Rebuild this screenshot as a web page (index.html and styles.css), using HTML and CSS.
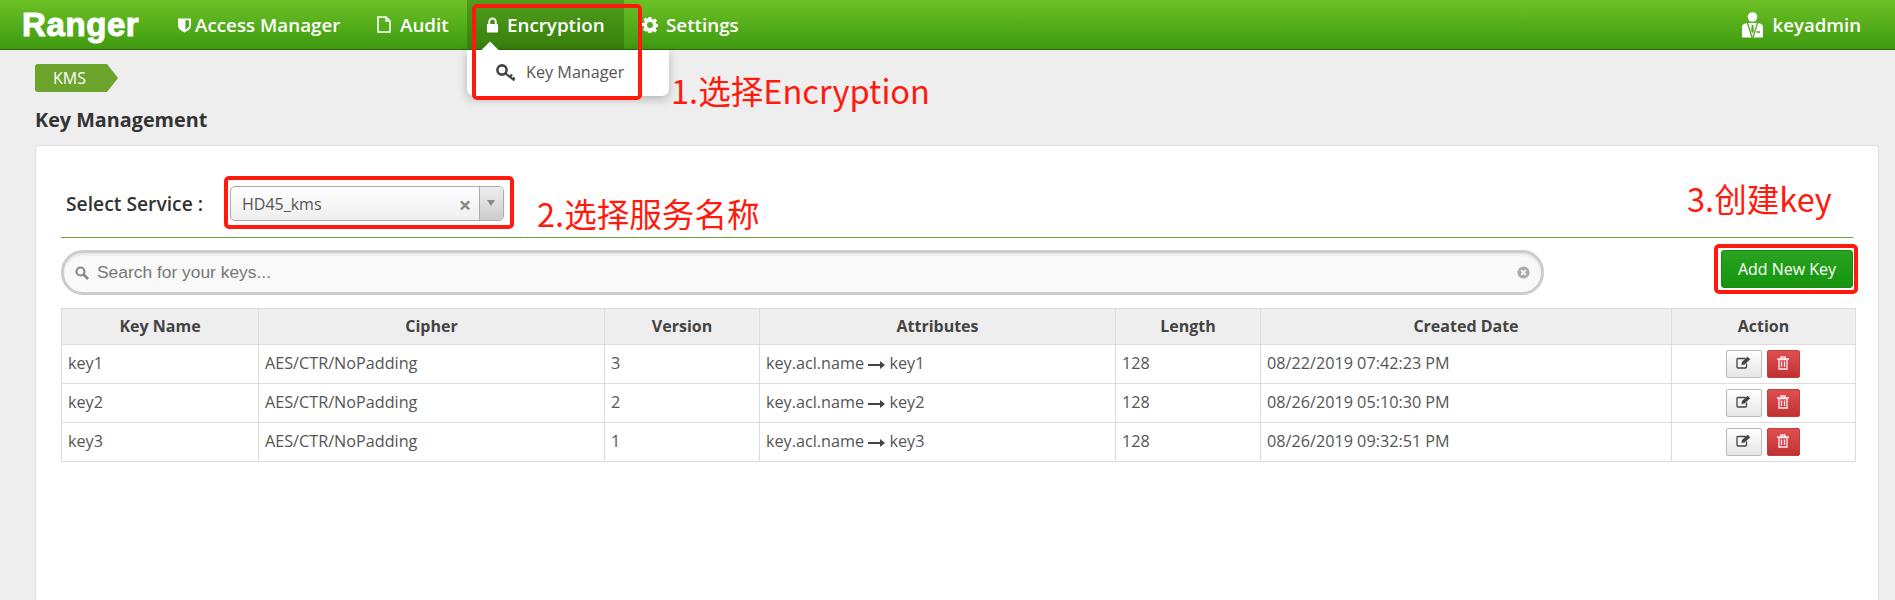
FILE: index.html
```html
<!DOCTYPE html>
<html lang="en">
<head>
  <meta charset="UTF-8">
  <title>Ranger - Key Management</title>
  <link rel="stylesheet" href="styles.css">
</head>
<body>
  <header class="navbar">
    <a class="brand">Ranger</a>
    <nav class="nav-links">
      <a class="nav-item nav-access">
        <svg class="nav-icon" viewBox="0 0 14 16" width="13" height="16"><path fill="#fff" d="M0 1h14v7c0 4-3 6-7 8-4-2-7-4-7-8z"/><path fill="#4fa519" d="M8 3h4v5c0 2-2 4-4 5z"/></svg>
        Access Manager
      </a>
      <a class="nav-item nav-audit">
        <svg class="nav-icon" viewBox="0 0 14 17" width="14" height="17"><path fill="none" stroke="#fff" stroke-width="1.6" d="M1 1h8l4 4v11H1z"/><path fill="none" stroke="#fff" stroke-width="1.4" d="M9 1v4h4"/></svg>
        Audit
      </a>
      <a class="nav-item nav-encryption">
        <svg class="nav-icon" viewBox="0 0 14 17" width="13" height="16"><path fill="none" stroke="#fff" stroke-width="2" d="M3.5 8V5a3.5 3.5 0 0 1 7 0v3"/><rect fill="#fff" x="1" y="7.500" width="12" height="9" rx="1"/></svg>
        Encryption
      </a>
      <a class="nav-item nav-settings">
        <svg class="nav-icon" viewBox="0 0 16 16" width="16" height="16"><path fill="#fff" fill-rule="evenodd" d="M6.600 0h2.800l.4 2.300 1.300.5L13 1.500l2 2-1.300 1.900.5 1.300 2.300.4v2.800l-2.300.4-.5 1.300 1.300 1.900-2 2-1.900-1.300-1.300.5-.4 2.300H6.600l-.4-2.300-1.300-.5L3 14.500l-2-2 1.300-1.900-.5-1.300L0 8.900V6.100l2.300-.4.5-1.300L1.500 2.500l2-2 1.400 1.300 1.300-.5zM8 5a3 3 0 1 0 0 6 3 3 0 0 0 0-6z"/></svg>
        Settings
      </a>
    </nav>
    <a class="nav-user">
      <svg viewBox="0 0 21 26" width="21" height="26"><circle fill="#fff" cx="10.500" cy="5" r="4.800"/><path fill="#fff" d="M0 14.500c0-2 2-3 5.500-3.500h10c3.500.5 5.500 1.500 5.500 3.500v10c0 1-1 1-1 1H1s-1 0-1-1z"/><path fill="none" stroke="#4fa519" stroke-width="1.300" d="M5.500 11l4.500 14.500M15.500 11L11 25.500M14.500 20h3.500"/><path fill="#4fa519" d="M9.700 13h1.600l.5 6-1.300 2.500L9.200 19z"/></svg>
      keyadmin
    </a>
  </header>

  <div class="dropdown">
    <span class="dropdown-caret"></span>
    <a class="dropdown-item">
      <svg viewBox="0 0 20 18" width="20" height="18"><circle fill="none" stroke="#444" stroke-width="2.600" cx="6" cy="6" r="4.600"/><path fill="none" stroke="#444" stroke-width="2.200" d="M9.500 9.500l9 7M14 13l2-2.500M17 15.500l1.500-2"/></svg>
      <span class="dropdown-label">Key Manager</span>
    </a>
  </div>

  <main class="content">
    <div class="breadcrumb">KMS</div>
    <h3 class="page-title">Key Management</h3>

    <section class="card">
      <div class="service-row">
        <label class="service-label">Select Service :</label>
        <div class="select-box">
          <span class="select-value">HD45_kms</span>
          <span class="select-clear">&times;</span>
          <span class="select-arrow"></span>
        </div>
      </div>

      <div class="toolbar">
        <div class="search-box">
          <svg class="search-icon" viewBox="0 0 14 14" width="14" height="14"><circle fill="none" stroke="#888" stroke-width="2.200" cx="5.500" cy="5.500" r="4"/><path stroke="#888" stroke-width="2.600" d="M8.500 8.500l4.500 4.500"/></svg>
          <span class="search-text">Search for your keys...</span>
          <svg class="search-clear" viewBox="0 0 14 14" width="13" height="13"><circle fill="#aaa" cx="7" cy="7" r="6.500"/><path stroke="#f8f8f8" stroke-width="2" d="M4.500 4.500l5 5M9.500 4.500l-5 5"/></svg>
        </div>
        <button class="btn-add">Add New Key</button>
      </div>

      <table class="key-table">
        <thead>
          <tr>
            <th class="col-name">Key Name</th>
            <th class="col-cipher">Cipher</th>
            <th class="col-version">Version</th>
            <th class="col-attrs">Attributes</th>
            <th class="col-length">Length</th>
            <th class="col-date">Created Date</th>
            <th class="col-action">Action</th>
          </tr>
        </thead>
        <tbody>
          <tr>
            <td>key1</td>
            <td>AES/CTR/NoPadding</td>
            <td>3</td>
            <td>key.acl.name <svg class="attr-arrow" viewBox="0 0 17 10" width="17" height="10"><path fill="#444" d="M0 4h12V1l5 4-5 4V6H0z"/></svg> key1</td>
            <td>128</td>
            <td>08/22/2019 07:42:23 PM</td>
            <td class="cell-action">
              <button class="btn-edit"><svg viewBox="0 0 15 13" width="15" height="13"><path fill="none" stroke="#444" stroke-width="1.300" d="M10.500 7.500V11a1 1 0 0 1-1 1H2a1 1 0 0 1-1-1V3.500a1 1 0 0 1 1-1h7.500"/><path fill="#444" d="M5.500 9l.5-3L11.500 .8l2.800 2.400L8.500 8.500z"/></svg></button>
              <button class="btn-delete"><svg viewBox="0 0 12 14" width="12" height="14"><path fill="none" stroke="#ffeef5" stroke-width="1.300" d="M2 3.500h8V13H2zM0 3h12M4 3V1h4v2M4.500 5.500V11M7.500 5.500V11"/></svg></button>
            </td>
          </tr>
          <tr>
            <td>key2</td>
            <td>AES/CTR/NoPadding</td>
            <td>2</td>
            <td>key.acl.name <svg class="attr-arrow" viewBox="0 0 17 10" width="17" height="10"><path fill="#444" d="M0 4h12V1l5 4-5 4V6H0z"/></svg> key2</td>
            <td>128</td>
            <td>08/26/2019 05:10:30 PM</td>
            <td class="cell-action">
              <button class="btn-edit"><svg viewBox="0 0 15 13" width="15" height="13"><path fill="none" stroke="#444" stroke-width="1.300" d="M10.500 7.500V11a1 1 0 0 1-1 1H2a1 1 0 0 1-1-1V3.500a1 1 0 0 1 1-1h7.500"/><path fill="#444" d="M5.500 9l.5-3L11.500 .8l2.800 2.400L8.500 8.500z"/></svg></button>
              <button class="btn-delete"><svg viewBox="0 0 12 14" width="12" height="14"><path fill="none" stroke="#ffeef5" stroke-width="1.300" d="M2 3.500h8V13H2zM0 3h12M4 3V1h4v2M4.500 5.500V11M7.500 5.500V11"/></svg></button>
            </td>
          </tr>
          <tr>
            <td>key3</td>
            <td>AES/CTR/NoPadding</td>
            <td>1</td>
            <td>key.acl.name <svg class="attr-arrow" viewBox="0 0 17 10" width="17" height="10"><path fill="#444" d="M0 4h12V1l5 4-5 4V6H0z"/></svg> key3</td>
            <td>128</td>
            <td>08/26/2019 09:32:51 PM</td>
            <td class="cell-action">
              <button class="btn-edit"><svg viewBox="0 0 15 13" width="15" height="13"><path fill="none" stroke="#444" stroke-width="1.300" d="M10.500 7.500V11a1 1 0 0 1-1 1H2a1 1 0 0 1-1-1V3.500a1 1 0 0 1 1-1h7.500"/><path fill="#444" d="M5.500 9l.5-3L11.500 .8l2.800 2.400L8.500 8.500z"/></svg></button>
              <button class="btn-delete"><svg viewBox="0 0 12 14" width="12" height="14"><path fill="none" stroke="#ffeef5" stroke-width="1.300" d="M2 3.500h8V13H2zM0 3h12M4 3V1h4v2M4.500 5.500V11M7.500 5.500V11"/></svg></button>
            </td>
          </tr>
        </tbody>
      </table>
    </section>
  </main>

  <!-- red notes drawn over the screenshot -->
  <div class="mark mark-encryption"></div>
  <div class="mark mark-select"></div>
  <div class="mark mark-add"></div>
  <div class="note note-1">1.选择Encryption</div>
  <div class="note note-2">2.选择服务名称</div>
  <div class="note note-3">3.创建key</div>
</body>
</html>
```

FILE: styles.css
```css
* {
  box-sizing: border-box;
}
html, body {
  height: 600px;
  overflow: hidden;
}
body {
  margin: 0;
  position: relative;
  background: #eeeeee;
  font-family: 'Open Sans', sans-serif;
  font-size: 16px;
  color: #555;
}

/* top bar */
.navbar {
  height: 50px;
  display: flex;
  align-items: center;
  background: linear-gradient(180deg, #6cc126, #3f9a10);
  border-bottom: 1px solid #2c6a0b;
  color: #fff;
}
.brand {
  margin-left: 22px;
  width: 156px;
  font-family: 'Liberation Sans', sans-serif;
  font-size: 33px;
  font-weight: 700;
  letter-spacing: 0.6px;
  line-height: 49px;
  -webkit-text-stroke: 1px #fff;
}
.nav-links {
  display: flex;
  height: 49px;
  align-items: center;
}
.nav-item {
  display: flex;
  align-items: center;
  height: 49px;
  font-size: 18.8px;
  font-weight: 600;
}
.nav-access {
  width: 199px;
  gap: 4px;
}
.nav-audit {
  width: 90px;
  gap: 9px;
}
.nav-encryption {
  width: 157px;
  margin-right: 18px;
  padding-left: 19px;
  gap: 8px;
  background: linear-gradient(180deg, #4f9d1c, #387f0e);
}
.nav-settings {
  gap: 8px;
}
.nav-user {
  display: flex;
  align-items: center;
  gap: 10px;
  margin-left: auto;
  margin-right: 34px;
  font-size: 18.6px;
  font-weight: 600;
}

/* encryption menu */
.dropdown {
  position: absolute;
  left: 467px;
  top: 50px;
  width: 202px;
  height: 46px;
  background: #fff;
  border-radius: 0 0 7px 7px;
  box-shadow: 0 3px 10px rgba(0, 0, 0, 0.25);
}
.dropdown-caret {
  position: absolute;
  left: 17px;
  top: -6px;
  width: 12px;
  height: 12px;
  background: #fff;
  transform: rotate(45deg);
}
.dropdown-item {
  position: relative;
  display: flex;
  align-items: center;
  gap: 10px;
  height: 46px;
  padding-left: 29px;
  font-size: 16.2px;
}
.dropdown-label {
  margin-bottom: 2px;
}

/* page */
.content {
  padding: 14px 16px 0 35px;
  height: 550px;
  display: flex;
  flex-direction: column;
}
.breadcrumb {
  width: 83px;
  height: 28px;
  padding-left: 18px;
  line-height: 28px;
  background: #6ba32d;
  color: #fff;
  border-radius: 3px 0 0 3px;
  clip-path: polygon(0 0, 72px 0, 100% 50%, 72px 100%, 0 100%);
}
.page-title {
  margin: 16px 0 13px;
  height: 24px;
  line-height: 24px;
  font-size: 19.8px;
  font-weight: 700;
  color: #333;
}
.card {
  flex: 1;
  padding: 0 25px;
  background: #fff;
  border: 1px solid #ddd;
  border-bottom: none;
  border-radius: 4px 4px 0 0;
}

/* service select */
.service-row {
  display: flex;
  align-items: center;
  height: 92px;
  padding: 24px 0 0 5px;
  border-bottom: 1px solid #6f9d3e;
}
.service-label {
  width: 164px;
  font-size: 19.3px;
  font-weight: 600;
  color: #333;
}
.select-box {
  display: flex;
  align-items: center;
  width: 274px;
  height: 35px;
  padding-left: 11px;
  background: linear-gradient(180deg, #ffffff, #eeeeee);
  border: 1px solid #aaa;
  border-radius: 5px;
  overflow: hidden;
}
.select-value {
  flex: 1;
}
.select-clear {
  width: 24px;
  padding-right: 4px;
  font-size: 22px;
  font-weight: 700;
  color: #888;
  text-align: center;
}
.select-arrow {
  position: relative;
  width: 24px;
  height: 100%;
  background: linear-gradient(180deg, #eeeeee, #cccccc);
  border-left: 1px solid #aaa;
}
.select-arrow::after {
  content: '';
  position: absolute;
  left: 7px;
  top: 13px;
  border: 4px solid transparent;
  border-top: 6px solid #888;
}

/* search and add */
.toolbar {
  display: flex;
  justify-content: space-between;
  align-items: flex-start;
  padding-top: 12px;
  margin-bottom: 13px;
}
.search-box {
  display: flex;
  align-items: center;
  width: 1483px;
  height: 45px;
  padding: 0 11px 0 11px;
  background: #f9f9f9;
  border: 3px solid #cccccc;
  border-radius: 22px;
  box-shadow: inset 0 2px 3px rgba(0, 0, 0, 0.08);
}
.search-text {
  flex: 1;
  margin-left: 8px;
  font-family: 'Liberation Sans', sans-serif;
  font-size: 17.4px;
  color: #777;
}
.btn-add {
  width: 132px;
  height: 38px;
  padding: 0;
  background: linear-gradient(180deg, #2aa322, #16950e);
  border: 1px solid #158a0e;
  border-radius: 3px;
  color: #fff;
  font-family: inherit;
  font-size: 16px;
}

/* keys table */
.key-table {
  width: 1794px;
  table-layout: fixed;
  border-collapse: collapse;
}
.key-table th,
.key-table td {
  border: 1px solid #ddd;
  padding: 0 6px 2px;
  height: 39px;
  text-align: left;
  font-size: 16.2px;
  color: #555;
}
.key-table th {
  height: 36px;
  background: #eeeeee;
  text-align: center;
  font-size: 16px;
  font-weight: 700;
  color: #444;
}
.attr-arrow {
  vertical-align: -1px;
}
.col-name { width: 197px; }
.col-cipher { width: 346px; }
.col-version { width: 155px; }
.col-attrs { width: 356px; }
.col-length { width: 145px; }
.col-date { width: 411px; }
.col-action { width: 184px; }
.key-table .cell-action {
  padding: 0 2px 0 0;
  text-align: center;
  font-size: 0;
}
.btn-edit,
.btn-delete {
  height: 28px;
  padding: 0;
  vertical-align: middle;
  border-radius: 2px;
}
.btn-edit {
  width: 36px;
  margin-right: 5px;
  background: linear-gradient(180deg, #ffffff, #e6e6e6);
  border: 1px solid #bbb;
}
.btn-delete {
  width: 33px;
  background: linear-gradient(180deg, #df4f4f, #c03232);
  border: 1px solid #c63c3c;
}

/* annotations */
.mark {
  position: absolute;
  border: 4px solid #ff1a0e;
  border-radius: 5px;
}
.mark-encryption {
  left: 472px;
  top: 4px;
  width: 170px;
  height: 96px;
}
.mark-select {
  left: 224px;
  top: 176px;
  width: 290px;
  height: 53px;
}
.mark-add {
  left: 1714px;
  top: 244px;
  width: 144px;
  height: 50px;
}
.note {
  position: absolute;
  font-family: 'Noto Sans CJK SC', sans-serif;
  font-size: 32.6px;
  line-height: 40px;
  color: #ff1a0e;
  white-space: nowrap;
}
.note-1 {
  left: 671px;
  top: 70px;
}
.note-2 {
  left: 537px;
  top: 193px;
}
.note-3 {
  left: 1687px;
  top: 178px;
}
```
